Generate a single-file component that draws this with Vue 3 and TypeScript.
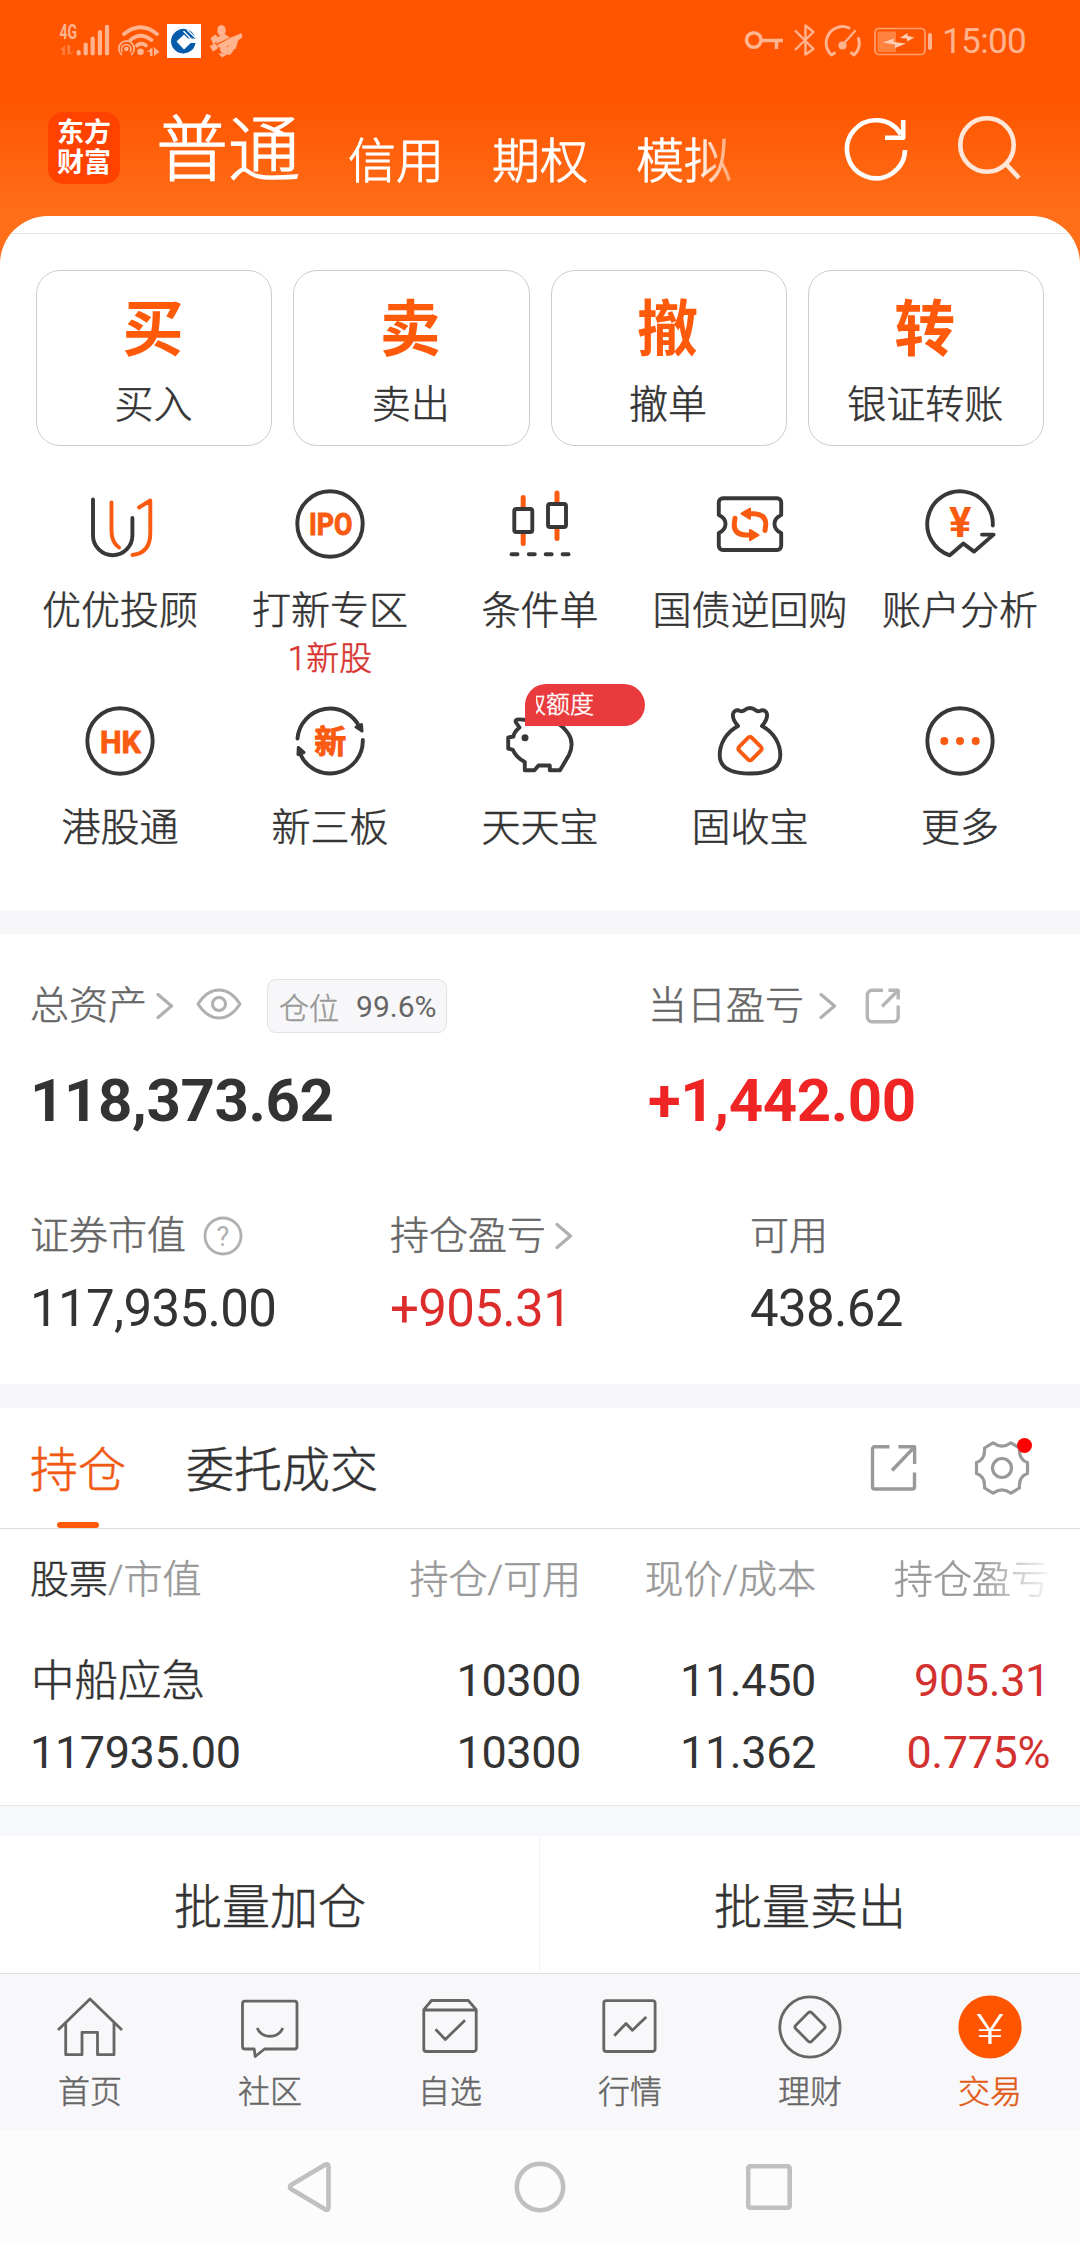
<script setup lang="ts">
interface Trade { mark: string; label: string }
interface Tool { icon: string; label: string; note?: string; badge?: string }
interface Tab { icon: string; label: string; active?: boolean }

const accounts: string[] = ['信用', '期权', '模拟']

const trades: Trade[] = [
  { mark: '买', label: '买入' },
  { mark: '卖', label: '卖出' },
  { mark: '撤', label: '撤单' },
  { mark: '转', label: '银证转账' },
]

const tools: Tool[] = [
  { icon: 'advisor', label: '优优投顾' },
  { icon: 'ipo', label: '打新专区', note: '1新股' },
  { icon: 'candles', label: '条件单' },
  { icon: 'repo', label: '国债逆回购' },
  { icon: 'analysis', label: '账户分析' },
  { icon: 'hk', label: '港股通' },
  { icon: 'neeq', label: '新三板' },
  { icon: 'pig', label: '天天宝', badge: '取额度' },
  { icon: 'bag', label: '固收宝' },
  { icon: 'more', label: '更多' },
]

const tabs: Tab[] = [
  { icon: 'home', label: '首页' },
  { icon: 'chat', label: '社区' },
  { icon: 'watch', label: '自选' },
  { icon: 'market', label: '行情' },
  { icon: 'wealth', label: '理财' },
  { icon: 'trade', label: '交易', active: true },
]
</script>

<template>
  <div class="phone">
    <div class="status">
      <svg class="s-net" width="106" height="42" viewBox="58 20 106 42">
        <text x="59.5" y="38.5" font-size="20" font-weight="700" textLength="17.5" lengthAdjust="spacingAndGlyphs">4G</text>
        <g opacity=".45"><path d="M60 50l5-5v10h-2.500v-5zM75 50l-5 5v-10h-2.500v10z" /></g>
        <g stroke="#ffb38e" stroke-width="4.200" stroke-linecap="round" fill="none">
          <path d="M78.700 52v1.500M85.700 44.500v9M92.700 38.500v15M99.900 32v21.500M107 26.800v26.700" />
          <path d="M124 34Q140.500 20.500 157 34M130.500 40Q140.500 31.500 151.500 40M137 45.500Q141 42 146 45.500" stroke-width="3.700" />
          <path d="M121.500 54.500a7.700 7.700 0 1 1 10 0" stroke-width="1.700" />
          <path d="M122 51.500a4.800 4.800 0 1 1 8.500 0" stroke-width="1.600" />
        </g>
        <circle cx="126.400" cy="49" r="2.300" /><circle cx="140.500" cy="51.700" r="3.300" />
        <path d="M147 52l5.500-5v9h-2.500v-4zM159.500 52l-5.500 4v-9z" />
      </svg>
      <svg class="s-bank" width="34" height="34" viewBox="0 0 34 34">
        <rect width="34" height="34" fill="#fff" />
        <path d="M18 5A12.300 12.300 0 1 0 28.500 19h-4.800L17 25.500 9.500 17.500 17 10.500l4 4h7.500A13 13 0 0 0 18 5Z" fill="#045cab" />
        <path d="M17 11.500l6 6-6 6-6-6z" fill="#fff" />
        <path d="M16.500 7l8 8.500M20 5.500l8 8" stroke="#fff" stroke-width="1.300" />
      </svg>
      <svg class="s-hand" width="34" height="34" viewBox="0 0 34 34">
        <g>
          <ellipse cx="12.500" cy="6.500" rx="4.200" ry="5.500" />
          <path d="M1.500 14l5-3.500 4 4-6 6zM.8 22l5.200-2.500 3.500 4.500-5.500 3.500zM9 13l6.500-3 5.500 3.500-14 6.500zM7.500 21.500l14.500-8 10.500-4.500 1 4-6.500 5.500-15 6zM19 22l10-4.500-2.500 7.500-6 1zM10.500 25l6.500-3 8 4-4 5-8-1.500zM9 29l9 1.500-5 3z" />
        </g>
      </svg>
      <svg class="s-key" width="40" height="42" viewBox="744 20 40 42" fill="none" stroke="#ffb38e" stroke-width="3.600">
        <circle cx="753.800" cy="40" r="7.300" /><path d="M761 40.500h22M776.500 40.500v8.500" />
      </svg>
      <svg class="s-bt" width="22" height="42" viewBox="793 20 22 42" fill="none" stroke="#ffb38e" stroke-width="2.400">
        <path d="M795 30.500l18.500 18.500-8 5.500v-29l8 6.500L795 50" />
      </svg>
      <svg class="s-gauge" width="40" height="42" viewBox="823 20 40 42" fill="none" stroke="#ffb38e" stroke-width="3" stroke-linecap="round">
        <path d="M849 28a16.300 16.300 0 0 0-17.500 27l3-2M858.500 38.500a16.300 16.300 0 0 1-4.500 16.500l-2.500-2" />
        <path d="M842.500 45l12.500-14" stroke-width="2.200" /><circle cx="842.500" cy="45.500" r="2.600" fill="#ffb38e" />
      </svg>
      <svg class="s-bat" width="60" height="42" viewBox="873 20 60 42">
        <rect x="875" y="28.500" width="50" height="26" rx="4" fill="none" stroke="#ffa06f" stroke-width="1.700" />
        <rect x="877.500" y="31.500" width="18.500" height="20.500" fill="#ff823f" />
        <path d="M883 42.500l11-4-.5 3.500 12.500 1.500-11 4.500v-3.500zM900 38l7.500-5v3l7 1.500-7.500 4v-3z" fill="#ffd0b6" />
        <rect x="928" y="33" width="4" height="17" rx="2" />
      </svg>
      <span class="time">15:00</span>
    </div>

    <header class="header">
      <div class="logo"><span>东方</span><span>财富</span></div>
      <div class="accounts">
        <b>普通</b>
        <span v-for="a in accounts" :key="a">{{ a }}</span>
      </div>
      <svg class="refresh" width="70" height="70" viewBox="841 114 70 70" fill="none" stroke="#fff" stroke-width="4.600">
        <path d="M905 150a29 29 0 1 1-4-15.500" /><path d="M885 137.800h18.200V120" />
      </svg>
      <svg class="search" width="70" height="70" viewBox="953 112 70 70" fill="none" stroke="#ffe6d8" stroke-width="4.600">
        <circle cx="987" cy="145" r="26.700" /><path d="M1005.500 163.500l13.500 14.500" />
      </svg>
    </header>

    <main class="sheet">
      <div class="strip"></div>
      <section class="trades">
        <div v-for="t in trades" :key="t.mark" class="trade">
          <strong>{{ t.mark }}</strong><span>{{ t.label }}</span>
        </div>
      </section>

      <section class="tools">
        <div v-for="t in tools" :key="t.icon" class="tool">
          <svg class="ticon" width="80" height="80" viewBox="0 0 80 80">
            <template v-if="t.icon === 'advisor'">
              <path d="M13 15.500V51.500a19.700 19.700 0 0 0 39.400 0V34" />
              <path class="o" d="M31.500 18.500V47q0 11 7.500 16.500M59 23.500l11.300-7V49q0 20-17.800 22" />
            </template>
            <template v-else-if="t.icon === 'ipo'">
              <circle cx="40" cy="40" r="32.700" />
              <text class="fat" x="19" y="51.200" font-size="31" textLength="43.500" lengthAdjust="spacingAndGlyphs">IPO</text>
            </template>
            <template v-else-if="t.icon === 'candles'">
              <path class="o w" d="M23.200 13.500V23M23.200 50v9.500M57 9v9M57 45v9.500" />
              <rect x="14.300" y="25" width="18" height="23" rx="2" /><rect x="48" y="20" width="18" height="23" rx="2" />
              <path d="M11.500 70.300h6M28.800 70.300h6M45.700 70.300h6M62.600 70.300h6" />
            </template>
            <template v-else-if="t.icon === 'repo'">
              <path d="M13 14.200H67a4.200 4.200 0 0 1 4.200 4.200V31q-6.700 3-6.700 9t6.700 9V61.800a4.200 4.200 0 0 1-4.200 4.200H13a4.200 4.200 0 0 1-4.200-4.200V49q6.700-3 6.700-9t-6.700-9V18.400A4.200 4.200 0 0 1 13 14.200Z" />
              <path class="o w" d="M39 29.700h5.500Q56 30.500 55.800 40.500L55 46.500M41 51.100h-5.500Q24 50.300 24.200 40.300L25 34.300" />
              <path class="of" d="M31.500 29.600l8.500-5v10.200zM48.500 51.100l-8.500 5V45.900z" />
            </template>
            <template v-else-if="t.icon === 'analysis'">
              <path d="M72.800 41.500A32.800 32.800 0 1 0 29.800 71.300L43.400 59.600 54.100 67.600 73.500 50.600H62" />
              <text x="40.200" y="53" font-size="42" text-anchor="middle">¥</text>
            </template>
            <template v-else-if="t.icon === 'hk'">
              <circle cx="40" cy="40" r="32.700" />
              <text class="fat" x="20" y="51.500" font-size="32" textLength="41" lengthAdjust="spacingAndGlyphs">HK</text>
            </template>
            <template v-else-if="t.icon === 'neeq'">
              <path d="M7.500 37.500A32.700 32.700 0 0 1 70 27M72.800 39A32.700 32.700 0 0 1 10.200 53" />
              <path class="df" d="M66 26l5.500-2.500.5 6.500zM14 51.500l-6 2 .3-7z" />
              <text class="fat" x="40.200" y="51.500" font-size="32" text-anchor="middle">新</text>
            </template>
            <template v-else-if="t.icon === 'pig'">
              <path d="M26 19Q13.500 17 16 21.500L19.500 26.500Q14 31 13.500 35.500L8.200 36.500V47.500L12.800 48.800Q16 56.500 24.800 61V69.300H34.500L38.500 64.500H49.800V69.300H60L69 54Q74.500 42 68.500 33 63 25 57 22 46 17 36 21Z" />
              <circle class="df" cx="25" cy="36.700" r="2" />
            </template>
            <template v-else-if="t.icon === 'bag'">
              <path d="M28 25C15 32 9.700 44 9.700 54 9.700 67 20 72.500 40 72.500S70.300 67 70.300 54C70.300 44 65 32 52 25M28 25C19.500 15 23 8 29 9.500Q31 11 34 9.500 40 4.500 46 9.500 49 11 51 9.500C57 8 60.500 15 52 25" />
              <rect class="o" x="31" y="38.700" width="18" height="18" rx="2.500" transform="rotate(45 40 47.700)" />
            </template>
            <template v-else>
              <circle cx="40" cy="40" r="32.700" />
              <path class="o dots" d="M24.300 40h.01M40 40h.01M55.700 40h.01" />
            </template>
          </svg>
          <span class="tlabel">{{ t.label }}</span>
          <span v-if="t.note" class="note">{{ t.note }}</span>
          <span v-if="t.badge" class="badge"><i><em>{{ t.badge }}</em></i></span>
        </div>
      </section>

      <div class="band"></div>

      <section class="assets">
        <div class="top">
          <div>
            <div class="line">
              <span class="lab">总资产</span>
              <svg class="chev" width="18" height="28" viewBox="0 0 18 28"><path d="M2 2.500 15.500 14 2 25.500" /></svg>
              <svg class="eye" width="46" height="32" viewBox="0 0 46 32">
                <path d="M2 16Q11 2 23 2T44 16Q35 30 23 30T2 16Z" /><circle cx="23" cy="16" r="6.500" />
              </svg>
              <span class="chip"><i>仓位</i><em>99.6%</em></span>
            </div>
            <div class="big">118,373.62</div>
          </div>
          <div>
            <div class="line">
              <span class="lab">当日盈亏</span>
              <svg class="chev gap" width="18" height="28" viewBox="0 0 18 28"><path d="M2 2.500 15.500 14 2 25.500" /></svg>
              <svg class="ext" width="36" height="36" viewBox="0 0 36 36">
                <path d="M18 2.300H7A4.700 4.700 0 0 0 2.300 7V29A4.700 4.700 0 0 0 7 33.700H28.500A4.700 4.700 0 0 0 33.200 29V17.500M23.500 2.300H33.200V11.500M33 2.500 17 18.500" />
              </svg>
            </div>
            <div class="big up">+1,442.00</div>
          </div>
        </div>
        <div class="bottom">
          <div>
            <div class="line2">
              <span class="lab">证券市值</span>
              <svg class="help" width="40" height="40" viewBox="0 0 40 40">
                <circle cx="20" cy="20" r="18" /><text x="20" y="29.500" font-size="27" text-anchor="middle">?</text>
              </svg>
            </div>
            <div class="mid">117,935.00</div>
          </div>
          <div>
            <div class="line2">
              <span class="lab">持仓盈亏</span>
              <svg class="chev near" width="18" height="28" viewBox="0 0 18 28"><path d="M2 2.500 15.500 14 2 25.500" /></svg>
            </div>
            <div class="mid up2">+905.31</div>
          </div>
          <div>
            <div class="line2"><span class="lab">可用</span></div>
            <div class="mid">438.62</div>
          </div>
        </div>
      </section>

      <div class="band"></div>

      <nav class="switch">
        <span class="on">持仓</span><span>委托成交</span>
        <svg class="share" width="48" height="48" viewBox="0 0 48 48">
          <path d="M19.500 2.800H4.500a2 2 0 0 0-2 2V43a2 2 0 0 0 2 2H42.500a2 2 0 0 0 2-2V28.500M28.500 2.800H44.600V20M44 3.500 22 26.500" />
        </svg>
        <div class="gear">
          <svg width="58" height="58" viewBox="0 0 58 58">
            <path d="M20 3.800Q29 10.500 38 3.800L46.500 9Q45.500 20.500 54.500 23.500V34.500Q45.500 37.500 46.500 49L38 54.200Q29 47.500 20 54.200L11.500 49Q12.500 37.500 3.500 34.500V23.500Q12.500 20.500 11.500 9Z" />
            <circle cx="29" cy="29" r="9.500" />
          </svg>
          <i></i>
        </div>
      </nav>

      <section class="table">
        <div class="row head">
          <span><b>股票</b>/市值</span><span>持仓/可用</span><span>现价/成本</span><span class="fade">持仓盈亏</span>
        </div>
        <div class="row r1">
          <span class="name">中船应急</span><span>10300</span><span>11.450</span><span class="red">905.31</span>
        </div>
        <div class="row r2">
          <span>117935.00</span><span>10300</span><span>11.362</span><span class="red">0.775%</span>
        </div>
      </section>

      <section class="batch"><span>批量加仓</span><span>批量卖出</span></section>
    </main>

    <nav class="tabs">
      <div v-for="t in tabs" :key="t.icon" class="tab" :class="{ active: t.active }">
        <svg width="72" height="72" viewBox="0 0 72 72">
          <path v-if="t.icon === 'home'" d="M4 39 36 8 68 39M11.700 32V63.700H28V41.300H43.500V63.700H60V32" />
          <path v-else-if="t.icon === 'chat'" d="M11 10.200H60.500a2.500 2.500 0 0 1 2.500 2.500V55.500a2.500 2.500 0 0 1-2.500 2.500H30.500L21.200 65.500 20.200 58H11a2.500 2.500 0 0 1-2.500-2.500V12.700A2.500 2.500 0 0 1 11 10.200ZM23.200 37C28 48 44 48 48.800 37" />
          <path v-else-if="t.icon === 'watch'" d="M9.800 18.700V58a2.500 2.500 0 0 0 2.500 2.500H59.700A2.500 2.500 0 0 0 62.200 58V18.700L54.300 9.500H17.500ZM9.800 19H62.200M21.500 38.200 31.300 48.500 51 29.200" />
          <path v-else-if="t.icon === 'market'" d="M12.300 9.600H58.600a2.500 2.500 0 0 1 2.500 2.500V58a2.500 2.500 0 0 1-2.500 2.500H12.300A2.500 2.500 0 0 1 9.800 58V12.100A2.500 2.500 0 0 1 12.300 9.600ZM20.300 44.700 32 32.500 38.400 39.300 52.200 26" />
          <template v-else-if="t.icon === 'wealth'">
            <circle cx="36" cy="36" r="30.200" />
            <rect x="24.700" y="24.700" width="22.600" height="22.600" rx="2.500" transform="rotate(45 36 36)" />
          </template>
          <template v-else>
            <circle class="solid" cx="36" cy="36" r="31.600" />
            <text x="22" y="53" font-size="43" textLength="28" lengthAdjust="spacingAndGlyphs">¥</text>
          </template>
        </svg>
        <span>{{ t.label }}</span>
      </div>
    </nav>

    <footer class="sysnav">
      <svg width="44" height="52" viewBox="0 0 44 52"><path d="M38.500 3.500 4 24Q2 26 4 28L38.500 48.500Q41.500 49.500 41.500 46.500V5.500Q41.500 2.500 38.500 3.500Z" /></svg>
      <svg width="52" height="52" viewBox="0 0 52 52"><circle cx="26" cy="26" r="23.200" /></svg>
      <svg width="46" height="46" viewBox="0 0 46 46"><rect x="2.200" y="2.200" width="41.500" height="41.500" rx="2" /></svg>
    </footer>
  </div>
</template>

<style>
body { background: #fcfcfc; }
</style>

<style scoped>
.phone {
  width: 1080px;
  height: 2244px;
  overflow: hidden;
  display: flex;
  flex-direction: column;
  background: linear-gradient(#ff5500 0, #ff5500 100px, #ff6f1a 216px, #ff6f1a 300px, #fcfcfc 300px);
  font-family: Roboto, "Noto Sans CJK SC", sans-serif;
  font-weight: 300;
  color: #333;
  white-space: nowrap;
}
i, em { font-style: normal; }
svg { display: block; flex: none; }
path, circle, rect { stroke-linejoin: round; }

/* light-weight Chinese labels get a hairline to reach the handset font's stem width */
.trade span, .tlabel, .note, .lab, .chip i, .switch span, .head, .name, .batch, .tab span, .badge em { -webkit-text-stroke: 0.5px currentColor; }

.status { height: 82px; display: flex; align-items: center; padding-left: 58px; fill: #ffb38e; flex: none; }
.s-bank { margin-left: 3px; }
.s-hand { margin-left: 8px; }
.s-key { margin-left: 501px; }
.s-bt { margin-left: 9px; }
.s-gauge { margin-left: 8px; }
.s-bat { margin-left: 10px; }
.time { margin: 2px 0 0 9px; font-size: 35px; letter-spacing: -0.6px; font-weight: 400; color: #ffb38e; line-height: 40px; }

.header { height: 134px; flex: none; display: flex; align-items: flex-start; padding-left: 48px; }
.logo { width: 72px; height: 72px; margin-top: 30px; border-radius: 15px; background: #ff4200; color: #fff; display: flex; flex-direction: column; align-items: center; justify-content: center; font-size: 27px; line-height: 30px; font-weight: 700; }
.accounts { width: 590px; margin: 17px 0 0 36px; display: flex; align-items: flex-start; gap: 48px; color: #fff; font-size: 48px; line-height: 100px; -webkit-text-stroke: 0.9px #fff; -webkit-mask-image: linear-gradient(90deg, #000 540px, transparent 600px); mask-image: linear-gradient(90deg, #000 540px, transparent 600px); }
.accounts b { font-size: 72px; font-weight: 300; padding-top: 2px; -webkit-text-stroke: 1.2px #fff; }
.accounts span { padding-top: 13px; }
.refresh { margin: 32px 0 0 95px; }
.search { margin: 30px 0 0 42px; }

.sheet { background: #fff; border-radius: 48px 48px 0 0; overflow: hidden; height: 1757px; flex: none; }
.strip { height: 17px; border-bottom: 1px solid #e2e2e2; }
.trades { margin: 36px 36px 0; height: 176px; display: grid; grid-template-columns: repeat(4, 1fr); gap: 21px; }
.trade { border: 1px solid #ccc; border-radius: 24px; box-sizing: border-box; display: flex; flex-direction: column; align-items: center; }
.trade strong { margin: 24px 2px 0 0; font-size: 61px; line-height: 70px; font-weight: 700; color: #ff5a0a; }
.trade span { margin: 15px 1px 0 0; font-size: 39px; line-height: 50px; }

.tools { padding: 38px 15px 0; height: 426px; display: grid; grid-template-columns: repeat(5, 210px); grid-template-rows: 217px 209px; }
.tool { position: relative; display: flex; flex-direction: column; align-items: center; }
.ticon { fill: none; stroke: #383838; stroke-width: 3.9; stroke-linecap: round; }
.ticon .o { stroke: #fa5b10; }
.ticon .w { stroke-width: 5; }
.ticon .of { fill: #fa5b10; stroke: #fa5b10; stroke-width: 2; }
.ticon .df { fill: #383838; stroke-width: 3; }
.ticon .dots { stroke-width: 8; }
.ticon text { fill: #fa5b10; stroke: none; font-weight: 700; }
.ticon .fat { stroke: #fa5b10; stroke-width: 1; stroke-linejoin: round; }
.tlabel { margin-top: 22px; font-size: 39px; line-height: 50px; }
.note { margin-top: 3px; font-size: 33px; line-height: 40px; color: #d8322f; }
.badge { position: absolute; left: 90px; top: -17px; width: 120px; height: 42px; border-radius: 21px 21px 21px 0; background: #e93b3d; color: #fff; box-sizing: border-box; padding-left: 11px; }
.badge i { display: flex; justify-content: flex-end; overflow: hidden; width: 58px; }
.badge em { font-size: 24px; line-height: 42px; }

.band { height: 24px; background: #f7f7fa; }

.assets { height: 450px; padding: 45px 0 0 30px; box-sizing: border-box; }
.top { display: grid; grid-template-columns: 618px 1fr; }
.line { height: 54px; display: flex; align-items: center; }
.lab { font-size: 39px; line-height: 50px; color: #666; }
.chev { margin-left: 9px; fill: none; stroke: #b0b0b0; stroke-width: 3.2; stroke-linecap: round; }
.chev.gap { margin-left: 15px; }
.chev.near { margin-left: 9px; }
.eye { margin: -4px 0 0 22px; fill: none; stroke: #b0b0b0; stroke-width: 3; }
.chip { margin-left: 25px; width: 180px; height: 54px; box-sizing: border-box; border: 1px solid #e2e2e5; border-radius: 9px; background: #f7f7fa; display: flex; align-items: center; padding-left: 11px; font-size: 30px; }
.chip i { color: #999; }
.chip em { margin-left: 17px; color: #666; font-weight: 400; }
.ext { margin: 0 0 0 28px; fill: none; stroke: #b5b5b5; stroke-width: 3.4; }
.big { margin-top: 38px; font-size: 60px; line-height: 60px; font-weight: 700; letter-spacing: -0.4px; }
.up { color: #ef2424; }
.bottom { margin-top: 80px; display: grid; grid-template-columns: repeat(3, 360px); }
.line2 { height: 50px; display: flex; align-items: center; }
.help { margin-left: 17px; fill: none; stroke: #b0b0b0; stroke-width: 2.8; }
.help text { fill: #b0b0b0; stroke: none; font-weight: 400; }
.mid { margin-top: 17px; font-size: 51px; line-height: 62px; font-weight: 400; letter-spacing: -0.65px; }
.up2 { color: #dc2c2b; }

.switch { height: 120px; border-bottom: 1px solid #dcdcdc; display: flex; align-items: center; padding-left: 30px; font-size: 48px; }
.switch span { line-height: 120px; margin-right: 60px; padding-top: 3px; height: 117px; }
.switch .on { position: relative; color: #f05a12; }
.switch .on::after { content: ""; position: absolute; left: 27px; bottom: 0; width: 42px; height: 6px; border-radius: 3px; background: #ff5a0a; }
.share { margin-left: auto; fill: none; stroke: #999; stroke-width: 3.4; }
.gear { position: relative; margin: 0 49px 0 55px; fill: none; stroke: #999; stroke-width: 3.2; }
.gear i { position: absolute; left: 44px; top: -1px; width: 15px; height: 15px; border-radius: 50%; background: #f00; }

.table { height: 276px; padding: 26px 0 0 30px; box-sizing: border-box; }
.row { display: grid; grid-template-columns: 315px 236px 235px 234px; text-align: right; line-height: 50px; font-size: 45px; font-weight: 400; letter-spacing: -0.4px; }
.row span:first-child { text-align: left; }
.head { font-size: 39px; font-weight: 300; color: #999; letter-spacing: 0; }
.head b { font-weight: 300; color: #333; }
.fade { -webkit-mask-image: linear-gradient(90deg, #000 165px, transparent 240px); mask-image: linear-gradient(90deg, #000 165px, transparent 240px); }
.r1 { margin-top: 51px; }
.r2 { margin-top: 22px; }
.name { font-size: 43.5px; font-weight: 300; letter-spacing: 0; padding: 1px 0 0 1px; height: 49px; }
.red { color: #d2312f; }

.batch { border-top: 1px solid #e8e8ea; box-shadow: inset 0 30px #f7f8fb; padding-top: 30px; height: 137px; display: grid; grid-template-columns: 540px 540px; text-align: center; font-size: 48px; line-height: 143px; }
.batch span { height: 137px; }
.batch span:first-child { box-shadow: inset -1px 0 #f3f3f5; }

.tabs { height: 157px; flex: none; box-sizing: border-box; border-top: 1px solid #e0e0e2; background: #f8f8fb; display: grid; grid-template-columns: repeat(6, 180px); color: #666; }
.tab { display: flex; flex-direction: column; align-items: center; padding-top: 17px; }
.tab svg { fill: none; stroke: #666; stroke-width: 2.8; }
.tab span { margin-top: 9px; font-size: 32px; line-height: 40px; }
.active { color: #e25a17; }
.active .solid { fill: #ff5500; stroke: none; }
.active text { fill: #fff; stroke: none; }

.sysnav { height: 114px; flex: none; background: #fcfcfc; display: flex; align-items: center; fill: none; stroke: #c0c0c0; stroke-width: 4.6; padding-left: 287px; }
.sysnav svg:nth-child(2) { margin-left: 183px; }
.sysnav svg:nth-child(3) { margin-left: 180px; }
</style>
